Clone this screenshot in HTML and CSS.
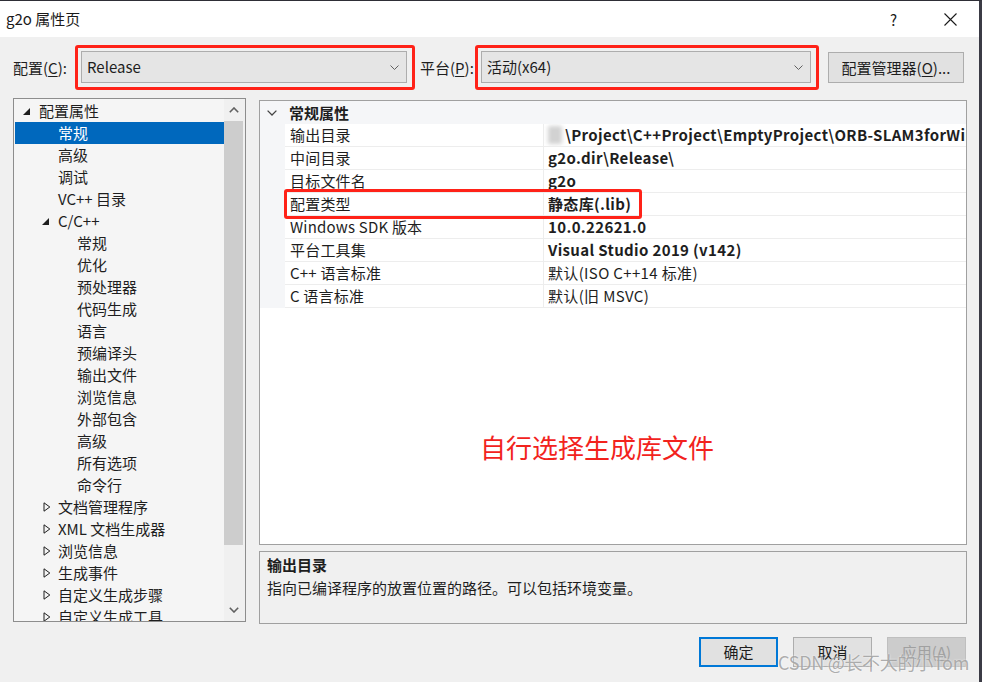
FILE: index.html
```html
<!DOCTYPE html>
<html lang="zh-CN">
<head>
<meta charset="utf-8">
<title>g2o 属性页</title>
<link rel="stylesheet" href="styles.css">
</head>
<body>
<div class="window">
  <div class="titlebar">
    <span class="title">g2o 属性页</span>
    <span class="help">?</span>
    <svg class="close" width="13" height="13" viewBox="0 0 13 13"><path d="M0.5 0.5 L12.5 12.5 M12.5 0.5 L0.5 12.5" stroke="#1a1a1a" stroke-width="1.1" fill="none"/></svg>
  </div>

  <div class="toolbar">
    <span class="lbl lbl-config">配置(<u>C</u>):</span>
    <div class="mark mark-config">
      <div class="select"><span>Release</span><svg class="chev" width="9" height="5" viewBox="0 0 9 5"><path d="M0.5 0.5 L4.5 4.5 L8.5 0.5" stroke="#606060" fill="none"/></svg></div>
    </div>
    <span class="lbl lbl-platform">平台(<u>P</u>):</span>
    <div class="mark mark-platform">
      <div class="select"><span>活动(x64)</span><svg class="chev" width="9" height="5" viewBox="0 0 9 5"><path d="M0.5 0.5 L4.5 4.5 L8.5 0.5" stroke="#606060" fill="none"/></svg></div>
    </div>
    <button class="btn btn-manager">配置管理器(<u>O</u>)...</button>
  </div>

  <div class="content">
    <div class="tree">
      <div class="tree-list">
        <div class="row l0"><span class="twisty"><svg width="7" height="7" viewBox="0 0 7 7"><polygon points="7,0 7,7 0,7" fill="#1e1e1e"/></svg></span>配置属性</div>
        <div class="row l1 selected"><span class="twisty"></span>常规</div>
        <div class="row l1"><span class="twisty"></span>高级</div>
        <div class="row l1"><span class="twisty"></span>调试</div>
        <div class="row l1"><span class="twisty"></span>VC++ 目录</div>
        <div class="row l1"><span class="twisty"><svg width="7" height="7" viewBox="0 0 7 7"><polygon points="7,0 7,7 0,7" fill="#1e1e1e"/></svg></span>C/C++</div>
        <div class="row l2"><span class="twisty"></span>常规</div>
        <div class="row l2"><span class="twisty"></span>优化</div>
        <div class="row l2"><span class="twisty"></span>预处理器</div>
        <div class="row l2"><span class="twisty"></span>代码生成</div>
        <div class="row l2"><span class="twisty"></span>语言</div>
        <div class="row l2"><span class="twisty"></span>预编译头</div>
        <div class="row l2"><span class="twisty"></span>输出文件</div>
        <div class="row l2"><span class="twisty"></span>浏览信息</div>
        <div class="row l2"><span class="twisty"></span>外部包含</div>
        <div class="row l2"><span class="twisty"></span>高级</div>
        <div class="row l2"><span class="twisty"></span>所有选项</div>
        <div class="row l2"><span class="twisty"></span>命令行</div>
        <div class="row l1"><span class="twisty"><svg class="collapsed" width="8" height="10" viewBox="0 0 8 10"><polygon points="1,0.8 6.8,5 1,9.2" fill="none" stroke="#1e1e1e" stroke-width="1"/></svg></span>文档管理程序</div>
        <div class="row l1"><span class="twisty"><svg class="collapsed" width="8" height="10" viewBox="0 0 8 10"><polygon points="1,0.8 6.8,5 1,9.2" fill="none" stroke="#1e1e1e" stroke-width="1"/></svg></span>XML 文档生成器</div>
        <div class="row l1"><span class="twisty"><svg class="collapsed" width="8" height="10" viewBox="0 0 8 10"><polygon points="1,0.8 6.8,5 1,9.2" fill="none" stroke="#1e1e1e" stroke-width="1"/></svg></span>浏览信息</div>
        <div class="row l1"><span class="twisty"><svg class="collapsed" width="8" height="10" viewBox="0 0 8 10"><polygon points="1,0.8 6.8,5 1,9.2" fill="none" stroke="#1e1e1e" stroke-width="1"/></svg></span>生成事件</div>
        <div class="row l1"><span class="twisty"><svg class="collapsed" width="8" height="10" viewBox="0 0 8 10"><polygon points="1,0.8 6.8,5 1,9.2" fill="none" stroke="#1e1e1e" stroke-width="1"/></svg></span>自定义生成步骤</div>
        <div class="row l1"><span class="twisty"><svg class="collapsed" width="8" height="10" viewBox="0 0 8 10"><polygon points="1,0.8 6.8,5 1,9.2" fill="none" stroke="#1e1e1e" stroke-width="1"/></svg></span>自定义生成工具</div>
      </div>
      <div class="scrollbar">
        <div class="sb-arrow"><svg width="10" height="6" viewBox="0 0 10 6"><path d="M0.8 5.2 L5 1 L9.2 5.2" stroke="#606060" stroke-width="1.6" fill="none"/></svg></div>
        <div class="sb-thumb"></div>
        <div class="sb-track"></div>
        <div class="sb-arrow"><svg width="10" height="6" viewBox="0 0 10 6"><path d="M0.8 0.8 L5 5 L9.2 0.8" stroke="#606060" stroke-width="1.6" fill="none"/></svg></div>
      </div>
    </div>

    <div class="right">
      <div class="grid">
        <div class="cat">
          <span class="cat-chev"><svg width="10" height="6" viewBox="0 0 10 6"><path d="M0.6 0.6 L5 5 L9.4 0.6" stroke="#444" stroke-width="1.3" fill="none"/></svg></span>
          <span class="cat-name">常规属性</span>
        </div>
        <div class="prop"><span class="gutter"></span><span class="name">输出目录</span><span class="val bold"><span class="smudge"></span>\Project\C++Project\EmptyProject\ORB-SLAM3forWindows\Thirdparty\g2o\</span></div>
        <div class="prop"><span class="gutter"></span><span class="name">中间目录</span><span class="val bold">g2o.dir\Release\</span></div>
        <div class="prop"><span class="gutter"></span><span class="name">目标文件名</span><span class="val bold">g2o</span></div>
        <div class="prop"><span class="gutter"></span><span class="name">配置类型</span><span class="val bold">静态库(.lib)</span></div>
        <div class="prop"><span class="gutter"></span><span class="name">Windows SDK 版本</span><span class="val bold">10.0.22621.0</span></div>
        <div class="prop"><span class="gutter"></span><span class="name">平台工具集</span><span class="val bold">Visual Studio 2019 (v142)</span></div>
        <div class="prop"><span class="gutter"></span><span class="name">C++ 语言标准</span><span class="val">默认(ISO C++14 标准)</span></div>
        <div class="prop"><span class="gutter"></span><span class="name">C 语言标准</span><span class="val">默认(旧 MSVC)</span></div>
        <div class="mark-row"></div>
        <div class="note">自行选择生成库文件</div>
      </div>
      <div class="desc">
        <div class="desc-title">输出目录</div>
        <div class="desc-text">指向已编译程序的放置位置的路径。可以包括环境变量。</div>
      </div>
    </div>
  </div>

  <div class="footer">
    <button class="btn btn-ok">确定</button>
    <button class="btn">取消</button>
    <button class="btn btn-disabled">应用(<u>A</u>)</button>
  </div>

  <div class="watermark">CSDN @长不大的小Tom</div>
</div>
</body>
</html>
```

FILE: styles.css
```css
* { box-sizing: border-box; }

html, body {
  margin: 0;
  padding: 0;
  background: #f0f0f0;
}

body {
  font-family: "Noto Sans CJK SC", "Noto Sans", sans-serif;
  font-size: 15px;
  color: #1e1e1e;
}

.window {
  position: relative;
  width: 982px;
  height: 682px;
  overflow: hidden;
  background: #f0f0f0;
  border-top: 1px solid #2e2e36;
  border-right: 3px solid #3b3b45;
}

/* title bar */
.titlebar {
  height: 36px;
  background: #ffffff;
  display: flex;
  align-items: center;
  padding-left: 6px;
}
.title {
  flex: 1;
  font-size: 15px;
  line-height: 20px;
  color: #1a1a1a;
}
.help {
  width: 14px;
  margin-right: 40px;
  font-size: 15px;
  color: #1a1a1a;
}
.close {
  margin-right: 22px;
}

/* toolbar */
.toolbar {
  display: flex;
  align-items: center;
  padding: 8px 0 0 13px;
}
.lbl {
  line-height: 20px;
  white-space: nowrap;
}
.lbl u { text-decoration: underline; text-underline-offset: 2px; }
.lbl-config { width: 62px; }
.lbl-platform { width: 60px; padding-left: 5px; }

.mark {
  border: 3px solid #ff2218;
  border-radius: 3px;
  padding: 3px 5px 4px 3px;
}
.mark-config { width: 340px; }
.mark-platform { width: 344px; }

.select {
  height: 32px;
  background: #e5e5e5;
  border: 1px solid #adadad;
  display: flex;
  align-items: center;
  justify-content: space-between;
  padding: 0 7px 0 5px;
  line-height: 20px;
}

.btn {
  font-family: "Noto Sans CJK SC", "Noto Sans", sans-serif;
  font-size: 15px;
  color: #1e1e1e;
  background: #e1e1e1;
  border: 1px solid #adadad;
  padding: 0;
  line-height: 20px;
}
.btn u { text-decoration: underline; text-underline-offset: 2px; }
.btn-manager {
  margin-left: 9px;
  width: 136px;
  height: 31px;
}

/* content */
.content {
  display: flex;
  gap: 13px;
  padding-left: 13px;
  margin-top: 8px;
}

.tree {
  width: 233px;
  height: 524px;
  border: 1px solid #8d8d8d;
  background: #f5f5f5;
  display: flex;
  overflow: hidden;
}
.tree-list {
  flex: 1;
  padding-top: 1px;
  overflow: hidden;
}
.row {
  height: 22px;
  line-height: 22px;
  display: flex;
  align-items: center;
  white-space: nowrap;
  color: #1e1e1e;
}
.row.l0 { padding-left: 9px; }
.row.l1 { padding-left: 28px; }
.row.l2 { padding-left: 47px; }
.row.selected {
  background: #0068bd;
  color: #ffffff;
  margin-left: 1px;
  padding-left: 27px;
}
.twisty {
  width: 16px;
  height: 22px;
  display: flex;
  align-items: center;
  flex: none;
}
.twisty .collapsed { margin-left: 1px; }

.scrollbar {
  width: 21px;
  padding-right: 2px;
  display: flex;
  flex-direction: column;
  background: #f0f0f0;
}
.sb-arrow {
  height: 22px;
  display: flex;
  align-items: center;
  justify-content: center;
  flex: none;
}
.sb-thumb {
  height: 424px;
  background: #cdcdcd;
  flex: none;
}
.sb-track { flex: 1; }

.right {
  width: 708px;
  display: flex;
  flex-direction: column;
}

.grid {
  position: relative;
  margin-top: 2px;
  height: 445px;
  background: #ffffff;
  border: 1px solid #a0a0a0;
  overflow: hidden;
}
.cat {
  height: 23px;
  background: #f5f6f8;
  display: flex;
  align-items: center;
}
.cat-chev {
  width: 29px;
  padding-left: 7px;
  display: flex;
  align-items: center;
}
.cat-name {
  font-weight: 700;
  line-height: 20px;
}
.prop {
  display: grid;
  grid-template-columns: 25px 258px 1fr;
  height: 23px;
}
.gutter {
  background: #f5f6f8;
}
.name, .val {
  line-height: 22px;
  border-bottom: 1px solid #ededed;
  white-space: nowrap;
  overflow: hidden;
}
.name { padding-left: 5px; letter-spacing: 0.2px; }
.val {
  padding-left: 4px;
  border-left: 1px solid #ededed;
  display: flex;
  align-items: center;
  letter-spacing: 0.35px;
}
.val.bold { font-weight: 700; }
.smudge {
  width: 14px;
  height: 18px;
  margin-right: 3px;
  flex: none;
  background: #d2d2d2;
  filter: blur(2px);
}

.mark-row {
  position: absolute;
  left: 24px;
  top: 88px;
  width: 358px;
  height: 30px;
  border: 3px solid #ff2218;
  border-radius: 3px;
}
.note {
  position: absolute;
  left: 220px;
  top: 331px;
  font-size: 26px;
  line-height: 30px;
  color: #f2231d;
  white-space: nowrap;
}

.desc {
  margin-top: 6px;
  height: 73px;
  border: 1px solid #a0a0a0;
  background: #f0f0f0;
  padding: 3px 0 0 7px;
}
.desc-title {
  font-weight: 700;
  line-height: 20px;
}
.desc-text {
  margin-top: 3px;
  line-height: 20px;
}

/* footer */
.footer {
  display: flex;
  justify-content: flex-end;
  gap: 15px;
  padding-right: 13px;
  margin-top: 13px;
}
.footer .btn {
  width: 79px;
  height: 30px;
}
.btn-ok {
  border: 2px solid #0078d7;
}
.btn-disabled {
  background: #cccccc;
  border-color: #bfbfbf;
  color: #a0a0a0;
}

.watermark {
  position: absolute;
  left: 778px;
  top: 650px;
  font-size: 18px;
  line-height: 22px;
  color: rgba(140, 140, 140, 0.7);
  text-shadow: 0 0 2px rgba(255, 255, 255, 0.9);
  white-space: nowrap;
  letter-spacing: -0.3px;
}
```
